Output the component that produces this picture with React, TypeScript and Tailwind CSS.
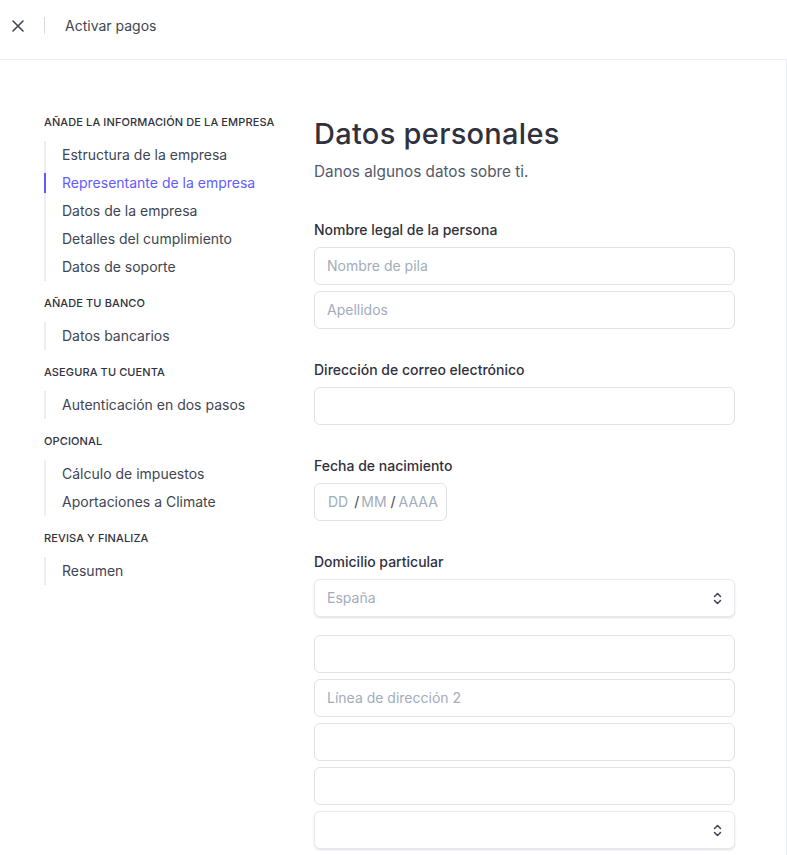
import type { ReactNode } from "react";

const FONT = { fontFamily: "Inter, 'Noto Sans', sans-serif" };

type Section = { title: string; items: string[] };

const SECTIONS: Section[] = [
  {
    title: "Añade la información de la empresa",
    items: [
      "Estructura de la empresa",
      "Representante de la empresa",
      "Datos de la empresa",
      "Detalles del cumplimiento",
      "Datos de soporte",
    ],
  },
  { title: "Añade tu banco", items: ["Datos bancarios"] },
  { title: "Asegura tu cuenta", items: ["Autenticación en dos pasos"] },
  { title: "Opcional", items: ["Cálculo de impuestos", "Aportaciones a Climate"] },
  { title: "Revisa y finaliza", items: ["Resumen"] },
];

const ACTIVE = "Representante de la empresa";

function CloseIcon() {
  return (
    <svg width="12" height="12" viewBox="0 0 12 12" fill="none">
      <path d="M1 1l10 10M11 1L1 11" stroke="#414552" strokeWidth="1.6" strokeLinecap="round" />
    </svg>
  );
}

function ChevronsIcon() {
  return (
    <svg width="9" height="13" viewBox="0 0 9 13" fill="none">
      <path d="M1.5 4.5L4.5 1.5L7.5 4.5M1.5 8.5L4.5 11.5L7.5 8.5" stroke="#414552" strokeWidth="1.5" strokeLinecap="round" strokeLinejoin="round" />
    </svg>
  );
}

function Input({ placeholder }: { placeholder?: string }) {
  return (
    <div className="flex h-[38px] w-full items-center rounded-md border border-[#dfe3e8] bg-white px-3 text-sm text-[#a3acba]">
      {placeholder}
    </div>
  );
}

function Select({ placeholder }: { placeholder?: string }) {
  return (
    <div className="flex h-[38px] w-full items-center justify-between rounded-md border border-[#e6e9ee] bg-white px-3 text-sm text-[#a3acba] shadow-[0_1px_2px_rgba(64,68,82,0.16)]">
      <span>{placeholder}</span>
      <ChevronsIcon />
    </div>
  );
}

function Field({ label, children, className = "" }: { label: string; children: ReactNode; className?: string }) {
  return (
    <div className={className}>
      <div className="text-sm leading-5 font-medium text-[#30313d]">{label}</div>
      <div className="mt-[7px] flex flex-col gap-[6px]">{children}</div>
    </div>
  );
}

export default function App() {
  return (
    <div className="min-h-screen w-[787px] bg-white" style={FONT}>
      <header className="flex h-[60px] items-center border-b border-[#ebeef1] pb-[8px] pl-3">
        <CloseIcon />
        <div className="ml-[20px] h-[17px] w-px bg-[#d5dbe1]" />
        <span className="ml-[20px] text-sm text-[#414552]">Activar pagos</span>
      </header>

      <div className="flex border-r border-[#ebeef1] pt-[54px] pb-10">
        <nav className="ml-[44px] w-[270px] shrink-0">
          {SECTIONS.map((s, i) => (
            <div key={s.title} className={i > 0 ? "mt-[14px]" : ""}>
              <div className="h-4 text-[11px] leading-4 font-medium tracking-[0.01em] text-[#30313d] uppercase">
                {s.title}
              </div>
              <ul className="mt-[11px] border-l-2 border-[#ebeef1]">
                {s.items.map((item) => {
                  const active = item === ACTIVE;
                  return (
                    <li
                      key={item}
                      className={`relative h-7 pl-4 text-sm leading-7 ${active ? "text-[#635bff]" : "text-[#414552]"}`}
                    >
                      {active && <span className="absolute top-[4px] -left-[2px] h-5 w-[2px] bg-[#635bff]" />}
                      {item}
                    </li>
                  );
                })}
              </ul>
            </div>
          ))}
        </nav>

        <main className="w-[421px]">
          <h1 className="mt-[2px] text-[29px] leading-9 font-medium tracking-[0.01em] text-[#30313d]">
            Datos personales
          </h1>
          <p className="mt-2 text-[15.3px] leading-6 text-[#545969]">Danos algunos datos sobre ti.</p>

          <Field label="Nombre legal de la persona" className="mt-9">
            <Input placeholder="Nombre de pila" />
            <Input placeholder="Apellidos" />
          </Field>

          <Field label="Dirección de correo electrónico" className="mt-[31px]">
            <Input />
          </Field>

          <Field label="Fecha de nacimiento" className="mt-[31px]">
            <div className="flex h-[38px] w-[133px] items-center rounded-md border border-[#dfe3e8] bg-white pl-[13px] text-sm text-[#a3acba]">
              <span>DD</span>
              <span className="ml-[6px] text-[#414552]">/</span>
              <span className="ml-[2px]">MM</span>
              <span className="ml-[4px] text-[#414552]">/</span>
              <span className="ml-[3px]">AAAA</span>
            </div>
          </Field>

          <Field label="Domicilio particular" className="mt-[31px]">
            <Select placeholder="España" />
          </Field>

          <div className="mt-[18px] flex flex-col gap-[6px]">
            <Input />
            <Input placeholder="Línea de dirección 2" />
            <Input />
            <Input />
            <Select />
          </div>
        </main>
      </div>
    </div>
  );
}
